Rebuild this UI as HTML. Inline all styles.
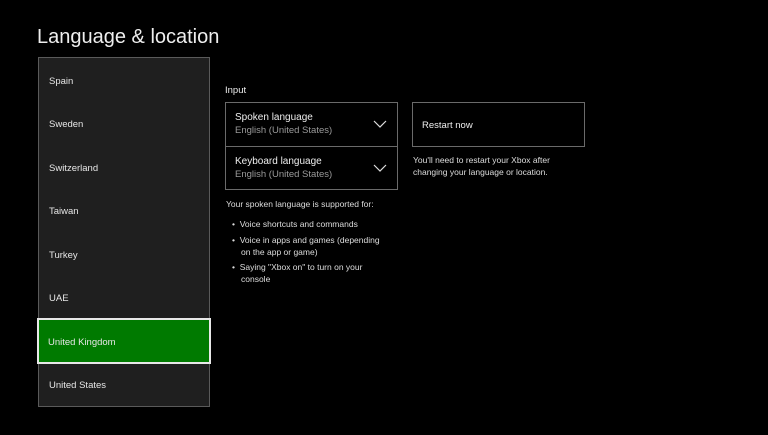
<!DOCTYPE html>
<html><head><style>
body{margin:0;width:768px;height:435px;background:#000;font-family:"Liberation Sans",sans-serif;color:#fff;position:relative;overflow:hidden}
.a{position:absolute}
h1{position:absolute;left:37px;top:26px;margin:0;font-weight:normal;font-size:20px;color:#eee}
.list{left:38px;top:57px;width:170px;height:348px;background:#1f1f1f;border:1px solid #5a5a5a}
.it{position:absolute;left:10px;font-size:9.5px;color:#e6e6e6}
.sel{left:37px;top:318px;width:170px;height:42px;background:#007a00;border:2px solid #e8e8e8}
.box{border:1px solid #6a6a6a;box-sizing:border-box}
.t1{font-size:10px;color:#eee}.t2{font-size:9.5px;color:#9a9a9a;margin-top:2px}
.sm{font-size:8.5px;color:#ddd;line-height:11.5px}
</style></head><body>
<h1>Language &amp; location</h1>
<div class="a list">
<div class="it" style="top:18px">Spain</div>
<div class="it" style="top:61px">Sweden</div>
<div class="it" style="top:105px">Switzerland</div>
<div class="it" style="top:148px">Taiwan</div>
<div class="it" style="top:192px">Turkey</div>
<div class="it" style="top:235px">UAE</div>
<div class="it" style="top:322px">United States</div>
</div>
<div class="a sel"><div class="it" style="top:17px;left:9px">United Kingdom</div></div>
<div class="a t1" style="left:225px;top:85px;font-size:9.5px">Input</div>
<div class="a box" style="left:225px;top:102px;width:173px;height:45px;padding:9px 9px">
<div class="t1">Spoken language</div><div class="t2">English (United States)</div></div>
<div class="a box" style="left:225px;top:146px;width:173px;height:44px;padding:9px 9px">
<div class="t1">Keyboard language</div><div class="t2">English (United States)</div></div>
<svg class="a" style="left:373px;top:120px" width="14" height="9"><path d="M1 1L7 7L13 1" stroke="#ddd" fill="none" stroke-width="1.2"/></svg>
<svg class="a" style="left:373px;top:164px" width="14" height="9"><path d="M1 1L7 7L13 1" stroke="#ddd" fill="none" stroke-width="1.2"/></svg>
<div class="a box" style="left:412px;top:102px;width:173px;height:45px;padding:17px 9px"><div class="t1" style="font-size:9.5px">Restart now</div></div>
<div class="a sm" style="left:413px;top:155px">You'll need to restart your Xbox after<br>changing your language or location.</div>
<div class="a sm" style="left:226px;top:199px">Your spoken language is supported for:</div>
<div class="a sm" style="left:232px;top:219px">•&nbsp; Voice shortcuts and commands</div>
<div class="a sm" style="left:232px;top:235px">•&nbsp; Voice in apps and games (depending<br><span style="padding-left:9px">on the app or game)</span></div>
<div class="a sm" style="left:232px;top:262px">•&nbsp; Saying "Xbox on" to turn on your<br><span style="padding-left:9px">console</span></div>
</body></html>
